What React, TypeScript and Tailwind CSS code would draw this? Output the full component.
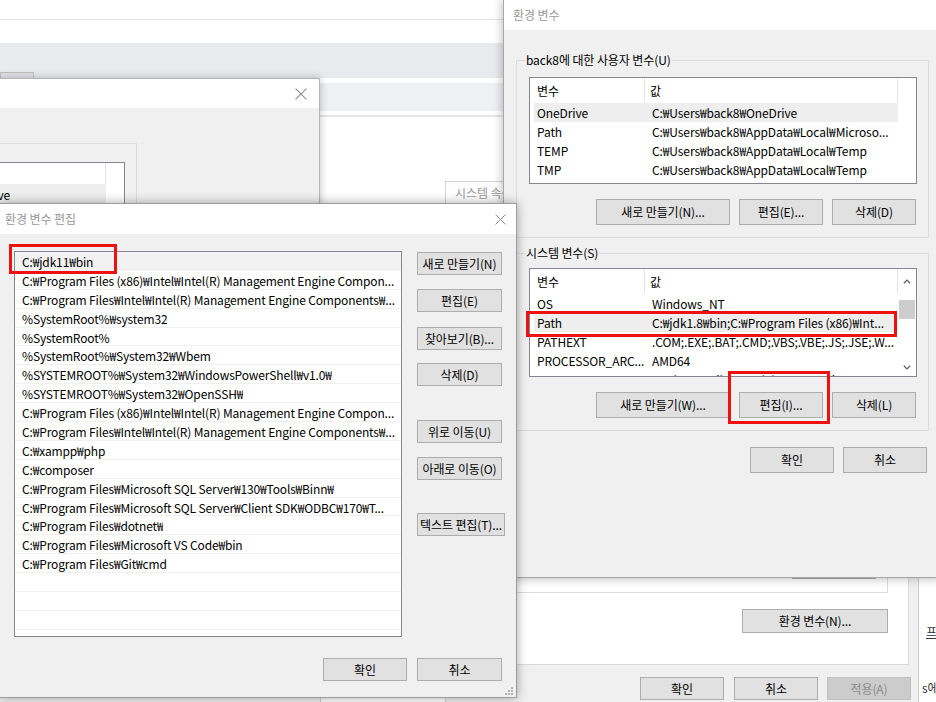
import React from "react";

type BtnProps = { children: React.ReactNode; className?: string; disabled?: boolean };

function WinButton({ children, className = "", disabled = false }: BtnProps) {
  return (
    <div
      className={`flex shrink-0 items-center justify-center whitespace-nowrap border text-[12px] ${
        disabled ? "border-[#bfbfbf] bg-[#cccccc] text-[#8a8a8a]" : "border-[#adadad] bg-[#e1e1e1] text-black"
      } ${className}`}
    >
      {children}
    </div>
  );
}

function CloseIcon({ size = 11 }: { size?: number }) {
  return (
    <svg width={size} height={size} viewBox="0 0 11 11" aria-hidden="true">
      <path d="M0.5 0.5L10.5 10.5M10.5 0.5L0.5 10.5" stroke="#8e8e8e" strokeWidth="1" fill="none" />
    </svg>
  );
}

function Grip() {
  const dots = [
    [8, 0],
    [8, 3],
    [5, 3],
    [8, 6],
    [5, 6],
    [2, 6],
  ];
  return (
    <svg width="10" height="8" viewBox="0 0 10 8" aria-hidden="true">
      {dots.map(([x, y], i) => (
        <rect key={i} x={x} y={y} width="2" height="2" fill="#b4b4b4" />
      ))}
    </svg>
  );
}

type VarRow = { name: string; value: string };

type VarListProps = {
  rows: VarRow[];
  selected: number;
  heightClass: string;
  scroll?: boolean;
};

function VarList({ rows, selected, heightClass, scroll = false }: VarListProps) {
  return (
    <div className={`flex w-[388px] overflow-hidden border border-[#828790] bg-white ${heightClass}`}>
      <div className="flex min-w-0 flex-1 flex-col">
        <div className="flex h-[25px] shrink-0 border-r border-[#e5e5e5]">
          <div className="flex w-[115px] shrink-0 items-center border-r border-[#e5e5e5] pl-[7px]">변수</div>
          <div className="flex items-center pl-[5px]">값</div>
        </div>
        {rows.map((r, i) => (
          <div
            key={i}
            className={`ml-[4px] flex h-[18.8px] shrink-0 items-center pt-[2px] ${i === selected ? "bg-[#eeeeee]" : ""}`}
          >
            <div className="w-[113px] shrink-0 truncate pl-[3px]">{r.name}</div>
            <div className="min-w-0 flex-1 truncate pl-[5px]">{r.value}</div>
          </div>
        ))}
      </div>
      {scroll ? (
        <div className="flex w-[18px] shrink-0 flex-col bg-white">
          <div className="flex h-[24px] items-center justify-center">
            <svg width="8" height="5" viewBox="0 0 8 5" aria-hidden="true">
              <path d="M0.8 4.3L4 1.1L7.2 4.3" stroke="#606060" strokeWidth="1.3" fill="none" />
            </svg>
          </div>
          <div className="mx-[1px] mt-[7px] h-[19px] bg-[#cdcdcd]" />
          <div className="flex-1" />
          <div className="flex h-[18px] items-center justify-center">
            <svg width="8" height="5" viewBox="0 0 8 5" aria-hidden="true">
              <path d="M0.8 0.7L4 3.9L7.2 0.7" stroke="#606060" strokeWidth="1.3" fill="none" />
            </svg>
          </div>
        </div>
      ) : (
        <div className="w-[18px] shrink-0" />
      )}
    </div>
  );
}

const userVars: VarRow[] = [
  { name: "OneDrive", value: "C:₩Users₩back8₩OneDrive" },
  { name: "Path", value: "C:₩Users₩back8₩AppData₩Local₩Microso..." },
  { name: "TEMP", value: "C:₩Users₩back8₩AppData₩Local₩Temp" },
  { name: "TMP", value: "C:₩Users₩back8₩AppData₩Local₩Temp" },
];

const systemVars: VarRow[] = [
  { name: "OS", value: "Windows_NT" },
  { name: "Path", value: "C:₩jdk1.8₩bin;C:₩Program Files (x86)₩Int..." },
  { name: "PATHEXT", value: ".COM;.EXE;.BAT;.CMD;.VBS;.VBE;.JS;.JSE;.W..." },
  { name: "PROCESSOR_ARC...", value: "AMD64" },
  { name: "PROCESSOR_IDE...", value: "Intel64 Family 6 Model 142 Stepping 10, ..." },
];

const pathItems = [
  "C:₩jdk11₩bin",
  "C:₩Program Files (x86)₩Intel₩Intel(R) Management Engine Compon...",
  "C:₩Program Files₩Intel₩Intel(R) Management Engine Components₩...",
  "%SystemRoot%₩system32",
  "%SystemRoot%",
  "%SystemRoot%₩System32₩Wbem",
  "%SYSTEMROOT%₩System32₩WindowsPowerShell₩v1.0₩",
  "%SYSTEMROOT%₩System32₩OpenSSH₩",
  "C:₩Program Files (x86)₩Intel₩Intel(R) Management Engine Compon...",
  "C:₩Program Files₩Intel₩Intel(R) Management Engine Components₩...",
  "C:₩xampp₩php",
  "C:₩composer",
  "C:₩Program Files₩Microsoft SQL Server₩130₩Tools₩Binn₩",
  "C:₩Program Files₩Microsoft SQL Server₩Client SDK₩ODBC₩170₩T...",
  "C:₩Program Files₩dotnet₩",
  "C:₩Program Files₩Microsoft VS Code₩bin",
  "C:₩Program Files₩Git₩cmd",
  "",
  "",
  "",
  "",
];

function ExplorerBackdrop() {
  return (
    <div className="absolute inset-0 flex flex-col bg-white">
      <div className="h-[20px] shrink-0 border-b border-[#e3e3e3]" />
      <div className="h-[23px] shrink-0" />
      <div className="h-[35px] shrink-0 bg-[#e9eaed]" />
      <div className="h-[5px] shrink-0" />
      <div className="h-[28px] shrink-0 bg-[#eef0f3]" />
      <div className="h-[4px] shrink-0" />
      <div className="h-[2px] shrink-0 bg-[#e6e6e6]" />
    </div>
  );
}

function BehindEnvWindow() {
  return (
    <>
      <div className="absolute left-0 top-[72px] h-[10px] w-[34px] border border-[#bdbdbd] bg-[#e3e4e7]" />
      <div className="absolute left-[-1px] top-[78px] flex h-[200px] w-[321px] flex-col overflow-hidden border border-[#b5b5b5] bg-[#f0f0f0] shadow-[0_0_8px_rgba(0,0,0,0.25)]">
        <div className="flex h-[29px] shrink-0 items-center justify-end bg-white pr-[12px]">
          <CloseIcon size={12} />
        </div>
        <div className="ml-[-10px] mt-[35px] h-[120px] w-[147px] shrink-0 border border-[#dcdcdc]">
          <div className="ml-[1px] mt-[18px] flex h-[100px] w-[133px] border border-[#828790] bg-white">
            <div className="flex min-w-0 flex-1 flex-col">
              <div className="h-[21px] shrink-0 border-r border-[#e5e5e5]" />
              <div className="flex h-[19px] shrink-0 items-center overflow-hidden bg-[#eeeeee] pt-[2px]">
                <span className="ml-[-34px] whitespace-nowrap">OneDrive</span>
              </div>
            </div>
            <div className="w-[18px] shrink-0" />
          </div>
        </div>
      </div>
    </>
  );
}

function SystemPropsWindow() {
  return (
    <div className="absolute left-0 top-[181px] flex h-[530px] w-[919px] flex-col border-r border-[#aaaaaa] bg-[#f0f0f0]">
      <div className="flex h-[22px] shrink-0 bg-white">
        <div className="ml-[445px] flex h-[23px] w-[70px] items-center border border-b-0 border-[#d4d4d4] bg-white pl-[9px] text-[#9a9a9a]">
          시스템 속성
        </div>
      </div>
      <div className="flex h-[462px] w-[909px] shrink-0 flex-col border border-[#d9d9d9] bg-white">
        <div className="ml-[10px] mr-[20px] mt-[300px] flex h-[89px] shrink-0 items-end justify-end border border-[#dcdcdc] pb-[13px] pr-[11px]">
          <WinButton className="h-[23px] w-[84px]">설정(T)...</WinButton>
        </div>
        <div className="mr-[20px] mt-[16px] flex justify-end">
          <WinButton className="h-[24px] w-[146px]">환경 변수(N)...</WinButton>
        </div>
      </div>
      <div className="flex shrink-0 items-start">
        <div className="ml-[320px] mt-[32px] h-[20px] w-[126px] border border-[#cccccc] bg-white" />
        <div className="flex-1" />
        <div className="mr-[7px] mt-[12px] flex">
          <WinButton className="h-[23px] w-[84px]">확인</WinButton>
          <WinButton className="ml-[10px] h-[23px] w-[84px]">취소</WinButton>
          <WinButton disabled className="ml-[9px] h-[23px] w-[84px]">
            적용(A)
          </WinButton>
        </div>
      </div>
    </div>
  );
}

function FarRightWindow() {
  return (
    <div className="absolute left-[918px] top-0 flex h-[702px] w-[30px] flex-col overflow-hidden border-l border-[#cfcfcf] bg-white">
      <div className="ml-[7px] mt-[624px] whitespace-nowrap leading-[16px] text-[#333] underline">프로그램</div>
      <div className="ml-[3px] mt-[40px] flex items-center whitespace-nowrap leading-[16px] text-[#333]">
        s에
        <span className="ml-[1px] inline-block h-[15px] w-[2px] bg-[#2a7fd4]" />
      </div>
    </div>
  );
}

function EnvVarsDialog() {
  return (
    <div className="absolute left-[503px] top-[-1px] flex h-[579px] w-[440px] flex-col border border-[#a8a8a8] bg-[#f0f0f0] shadow-[0_0_10px_rgba(0,0,0,0.3)]">
      <div className="flex h-[30px] shrink-0 items-center bg-white pl-[9px] text-[#999999]">환경 변수</div>
      <div className="flex flex-col pl-[12px]">
        <div className="relative mt-[30px] flex h-[178px] w-[413px] flex-col border border-[#dcdcdc] pl-[12px] pt-[16px]">
          <span className="absolute left-[8px] top-[-9px] bg-[#f0f0f0] px-[1px] leading-[16px]">
            back8에 대한 사용자 변수(U)
          </span>
          <VarList rows={userVars} selected={0} heightClass="h-[107px]" />
          <div className="mt-[15px] flex justify-end gap-[9px] pr-[12px]">
            <WinButton className="h-[26px] w-[134px]">새로 만들기(N)...</WinButton>
            <WinButton className="h-[26px] w-[84px]">편집(E)...</WinButton>
            <WinButton className="h-[26px] w-[84px]">삭제(D)</WinButton>
          </div>
        </div>
        <div className="relative mt-[15px] flex h-[178px] w-[413px] flex-col border border-[#dcdcdc] pl-[12px] pt-[14px]">
          <span className="absolute left-[8px] top-[-9px] bg-[#f0f0f0] px-[1px] leading-[16px]">시스템 변수(S)</span>
          <VarList rows={systemVars} selected={1} heightClass="h-[109px]" scroll />
          <div className="mt-[15px] flex justify-end gap-[9px] pr-[12px]">
            <WinButton className="h-[26px] w-[134px]">새로 만들기(W)...</WinButton>
            <WinButton className="h-[26px] w-[84px]">편집(I)...</WinButton>
            <WinButton className="h-[26px] w-[84px]">삭제(L)</WinButton>
          </div>
        </div>
        <div className="mt-[16px] flex w-[413px] justify-end gap-[9px] pr-[2px]">
          <WinButton className="h-[26px] w-[84px]">확인</WinButton>
          <WinButton className="h-[26px] w-[84px]">취소</WinButton>
        </div>
      </div>
    </div>
  );
}

function EditPathDialog() {
  return (
    <div className="absolute left-[-1px] top-[203px] flex h-[495px] w-[518px] flex-col border border-[#9c9c9c] bg-[#f0f0f0] shadow-[0_0_10px_rgba(0,0,0,0.35)]">
      <div className="flex h-[30px] shrink-0 items-center justify-between bg-white pl-[5px] pr-[10px]">
        <span className="text-[#999999]">환경 변수 편집</span>
        <CloseIcon size={11} />
      </div>
      <div className="relative flex flex-1 flex-col">
        <div className="flex pl-[14px] pt-[17px]">
          <div className="h-[386px] w-[388px] shrink-0 overflow-hidden border border-[#828790] bg-white">
            {pathItems.map((t, i) => (
              <div
                key={i}
                className={`flex h-[18.9px] items-center border-b border-[#f0f0f0] pl-[7px] pt-[2px] tracking-[-0.15px] ${
                  i === 0 ? "bg-[#f2f2f2]" : ""
                }`}
              >
                <span className="truncate whitespace-nowrap">{t}</span>
              </div>
            ))}
          </div>
          <div className="ml-[15px] flex flex-col pt-[1px]">
            <WinButton className="h-[23px] w-[85px]">새로 만들기(N)</WinButton>
            <WinButton className="mt-[14px] h-[23px] w-[85px]">편집(E)</WinButton>
            <WinButton className="mt-[15px] h-[23px] w-[85px]">찾아보기(B)...</WinButton>
            <WinButton className="mt-[13px] h-[23px] w-[85px]">삭제(D)</WinButton>
            <WinButton className="mt-[34px] h-[23px] w-[85px]">위로 이동(U)</WinButton>
            <WinButton className="mt-[14px] h-[23px] w-[85px]">아래로 이동(O)</WinButton>
            <WinButton className="mt-[33px] h-[23px] w-[88px]">텍스트 편집(T)...</WinButton>
          </div>
        </div>
        <div className="mt-[21px] flex justify-end gap-[10px] pr-[14px]">
          <WinButton className="h-[23px] w-[84px]">확인</WinButton>
          <WinButton className="h-[23px] w-[85px]">취소</WinButton>
        </div>
        <div className="absolute bottom-[2px] right-[3px]">
          <Grip />
        </div>
      </div>
    </div>
  );
}

export default function App() {
  return (
    <div className="relative h-[702px] w-[936px] overflow-hidden bg-white font-['Noto_Sans_CJK_KR',sans-serif] text-[12px] tracking-[-0.1px] text-black">
      <ExplorerBackdrop />
      <SystemPropsWindow />
      <BehindEnvWindow />
      <FarRightWindow />
      <EnvVarsDialog />
      <EditPathDialog />
      {/* red highlight marks drawn over the screenshot */}
      <div className="absolute left-[9px] top-[244px] h-[30px] w-[108px] border-[3px] border-[#ee1111]" />
      <div className="absolute left-[526px] top-[311px] h-[26px] w-[371px] border-[3px] border-[#ee1111]" />
      <div className="absolute left-[728px] top-[371px] h-[53px] w-[102px] border-[3px] border-[#ee1111]" />
    </div>
  );
}
